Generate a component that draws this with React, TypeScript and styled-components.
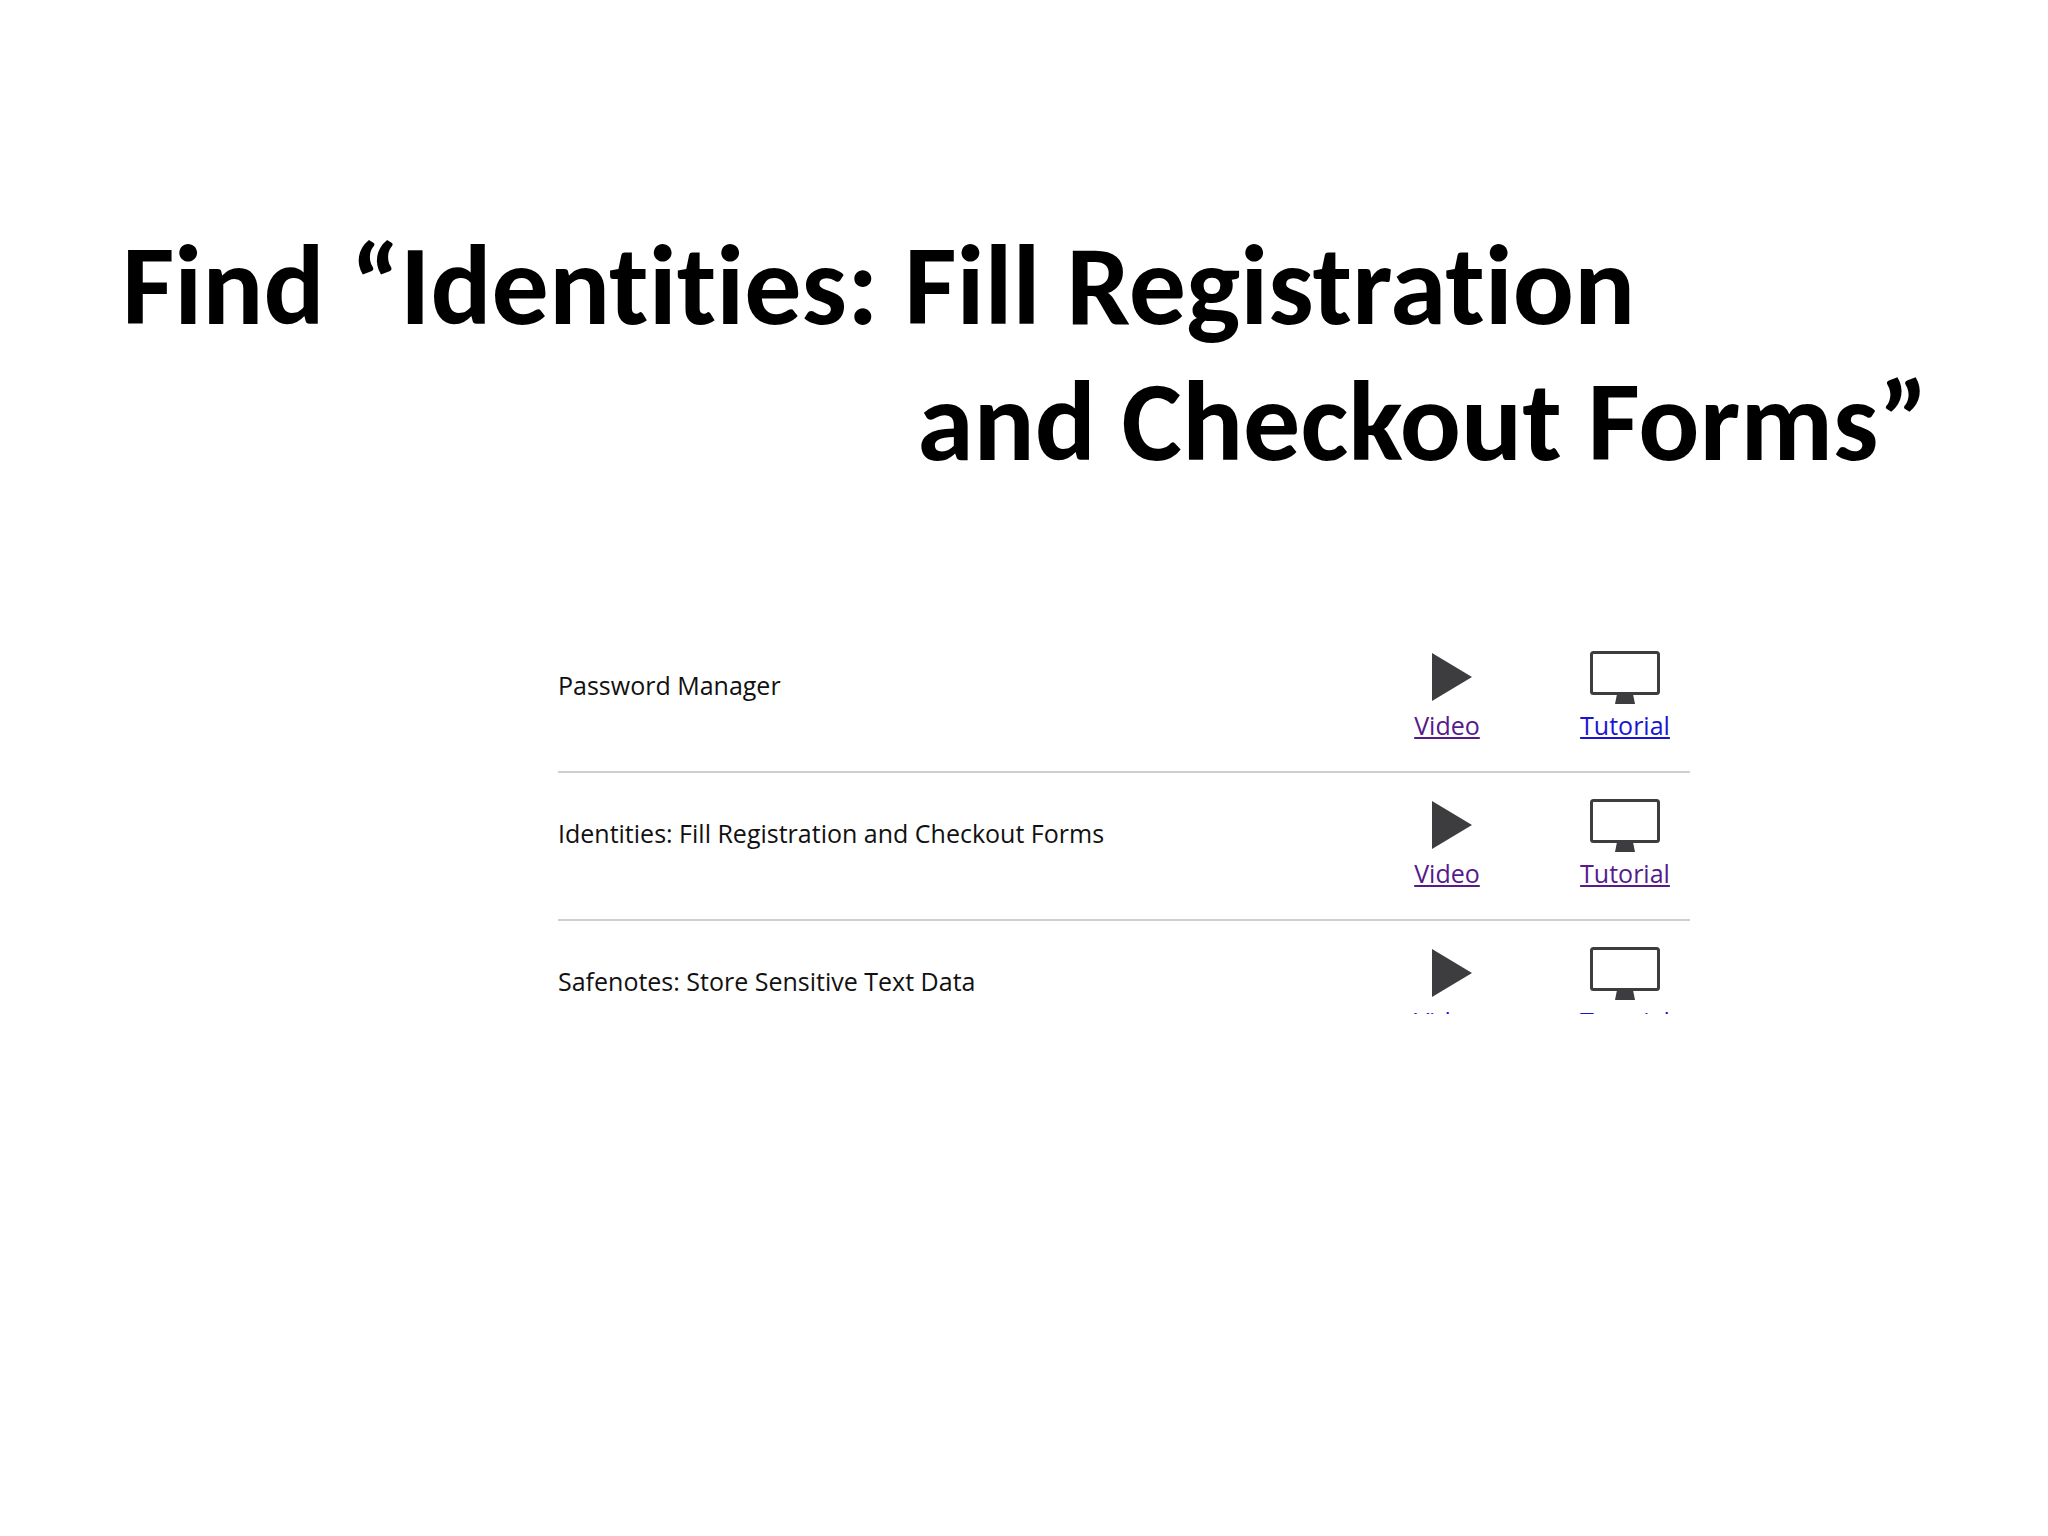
import React from "react";
import styled, { createGlobalStyle } from "styled-components";

const GlobalStyle = createGlobalStyle`
  *, *::before, *::after { box-sizing: border-box; }
  body {
    margin: 0;
    background: #fff;
    color: #111;
    font-family: "Open Sans", "Noto Sans", sans-serif;
  }
`;

const Slide = styled.main`
  min-height: 100vh;
  padding: 217px 120px 0 122px;
  background: #fff;
`;

const Title = styled.h1`
  display: flex;
  flex-direction: column;
  margin: 0;
  color: #000;
  font: 700 114px/136px Carlito, Calibri, Lato, sans-serif;
  font-variant-ligatures: none;
`;

const TitleLine = styled.span<{ $end?: boolean }>`
  align-self: ${(p) => (p.$end ? "flex-end" : "flex-start")};
  white-space: nowrap;
`;

const Excerpt = styled.section`
  max-width: 1132px;
  height: 389px;
  margin: 136px 238px 0 auto;
  overflow: hidden;
`;

const LessonTable = styled.table`
  width: 100%;
  border-collapse: separate;
  border-spacing: 0;
  table-layout: fixed;
  font-size: 25px;
  line-height: 34px;
`;

const Row = styled.tr`
  height: 148px;
`;

const NameCell = styled.th`
  padding: 43px 0 0;
  border-bottom: 2px solid #d0ced2;
  font-weight: 400;
  text-align: left;
  vertical-align: top;
`;

const LinkCell = styled.td<{ $width: number }>`
  width: ${(p) => p.$width}px;
  padding: 24px 0 0;
  border-bottom: 2px solid #d0ced2;
  vertical-align: top;
`;

const IconLink = styled.a<{ $visited?: boolean }>`
  display: flex;
  flex-direction: column;
  align-items: center;
  width: 92px;
  gap: 3px;
  color: ${(p) => (p.$visited ? "#551a8b" : "#1a14d2")};
  text-decoration-line: underline;
  text-decoration-thickness: 2px;
  text-underline-offset: 2px;
  text-decoration-skip-ink: none;
`;

const Icon = styled.svg`
  display: block;
  width: 70px;
  height: 56px;
  fill: #3d3c3f;
`;

const PlayIcon = () => (
  <Icon viewBox="0 0 70 56" aria-hidden="true">
    <path d="M20 4 60 28 20 52Z" />
  </Icon>
);

const MonitorIcon = () => (
  <Icon viewBox="0 0 70 56" aria-hidden="true">
    <rect x="1.500" y="3.500" width="67" height="41" rx="2" fill="none" stroke="#3d3c3f" strokeWidth="3" />
    <path d="M27 45h16l2 10H25Z" />
  </Icon>
);

const lessons = [
  { name: "Password Manager", videoSeen: true, tutorialSeen: false },
  { name: "Identities: Fill Registration and Checkout Forms", videoSeen: true, tutorialSeen: true },
  { name: "Safenotes: Store Sensitive Text Data", videoSeen: false, tutorialSeen: false },
];

export default function App() {
  return (
    <>
      <GlobalStyle />
      <Slide>
        <Title>
          <TitleLine>Find “Identities: Fill Registration</TitleLine>
          <TitleLine $end>and Checkout Forms”</TitleLine>
        </Title>
        <Excerpt>
          <LessonTable>
            <tbody>
              {lessons.map((lesson) => (
                <Row key={lesson.name}>
                  <NameCell scope="row">{lesson.name}</NameCell>
                  <LinkCell $width={178}>
                    <IconLink href="#video" $visited={lesson.videoSeen}>
                      <PlayIcon />
                      Video
                    </IconLink>
                  </LinkCell>
                  <LinkCell $width={111}>
                    <IconLink href="#tutorial" $visited={lesson.tutorialSeen}>
                      <MonitorIcon />
                      Tutorial
                    </IconLink>
                  </LinkCell>
                </Row>
              ))}
            </tbody>
          </LessonTable>
        </Excerpt>
      </Slide>
    </>
  );
}
